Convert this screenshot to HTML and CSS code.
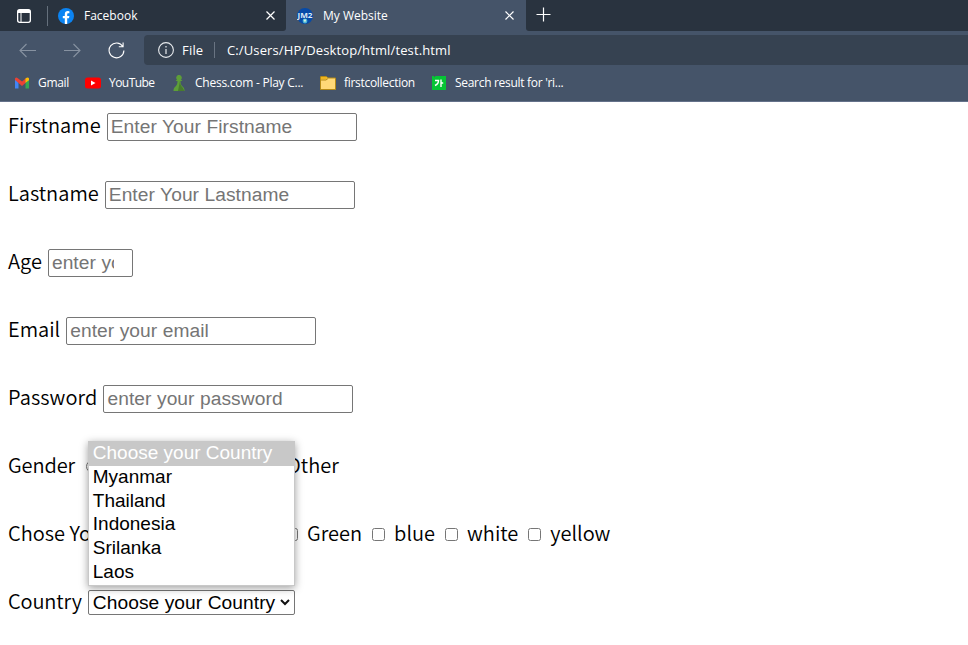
FILE: index.html
```
<!DOCTYPE html>
<html lang="en">
<head>
<meta charset="utf-8">
<title>My Website</title>
<link rel="stylesheet" href="styles.css">
</head>
<body>
<header class="browser">
  <div class="tabs">
    <div class="inactive">
      <svg class="workspace" width="14" height="14" viewBox="0 0 14 14"><rect x=".65" y=".65" width="12.7" height="12.7" rx="2" fill="none" stroke="#fff" stroke-width="1.3"/><path d="M1 1h12v3H1z" fill="#fff"/><path d="M4 4v9" stroke="#fff"/></svg>
      <i class="divider"></i>
      <svg class="facebook" width="16" height="16" viewBox="0 0 16 16"><circle cx="8" cy="8" r="8" fill="#0b84f3"/><path d="M6.8 16v-5.7h-2V8h2V6.2c0-2 1.2-3.1 3-3.1l1.6.1v2h-1c-.9 0-1.2.5-1.2 1.1V8h2.2l-.4 2.3H9.2V16z" fill="#fff"/></svg>
      <span class="tab-title">Facebook</span>
      <svg class="close" width="9" height="9" viewBox="0 0 9 9"><path d="M.5.5l8 8M8.5.5l-8 8" stroke="#fff" stroke-width="1.2"/></svg>
    </div>
    <div class="active">
      <svg class="jm" width="16" height="16" viewBox="0 0 16 16"><circle cx="8" cy="8" r="8" fill="#064aa7"/><text x="8" y="9.6" text-anchor="middle" textLength="15" lengthAdjust="spacingAndGlyphs">JM2</text><circle cx="8" cy="13" r="2.4" fill="#4eb5d4"/><path d="M6.5 12l2-1 .5 1.5-1 2z" fill="#d7f2dd"/></svg>
      <span class="tab-title">My Website</span>
      <svg class="close" width="9" height="9" viewBox="0 0 9 9"><path d="M.5.5l8 8M8.5.5l-8 8" stroke="#fff" stroke-width="1.2"/></svg>
    </div>
    <div class="newtab"><svg width="15" height="15" viewBox="0 0 15 15"><path d="M7.5.5v14M.5 7.5h14" stroke="#fff" stroke-width="1.2"/></svg></div>
  </div>
  <div class="toolbar">
    <svg class="arrow" width="17" height="15" viewBox="0 0 17 15"><path d="M17 7.5H1M7.5 1L1 7.5 7.5 14" fill="none" stroke="#8792a1" stroke-width="1.1"/></svg>
    <svg class="arrow forward" width="17" height="15" viewBox="0 0 17 15"><path d="M0 7.5h16M9.5 1L16 7.5 9.5 14" fill="none" stroke="#8792a1" stroke-width="1.1"/></svg>
    <svg class="reload" width="17" height="17" viewBox="0 0 17 17"><path d="M14.8 4.5A7.4 7.4 0 1 0 15.9 8.5M15.1.5v4.2h-4.3" fill="none" stroke="#fff" stroke-width="1.1"/></svg>
    <div class="address">
      <svg width="16" height="16" viewBox="0 0 16 16"><circle cx="8" cy="8" r="7.4" fill="none" stroke="#e8ebee" stroke-width="1.1"/><path d="M8 7v5M8 4v1.5" stroke="#e8ebee" stroke-width="1.2"/></svg>
      <span class="file">File</span><i></i><span class="url">C:/Users/HP/Desktop/html/test.html</span>
    </div>
  </div>
  <nav class="bookmarks">
    <a class="gmail"><svg width="16" height="16" viewBox="0 0 16 16"><path d="M1 13.5V4l3.5 2.3v7.2z" fill="#4285f4"/><path d="M11.5 6.3L15 4v9.5h-3.5z" fill="#34a853"/><path d="M1 5V3.5Q2 2 3.5 3L8 6.5 12 3.3v4.2L8 11 4 7.5z" fill="#ea4335"/><path d="M11.5 7.8V3.5Q14 1.5 15 3.5V5.3z" fill="#fbbc04"/></svg><span>Gmail</span></a>
    <a class="youtube"><svg width="16" height="16" viewBox="0 0 16 16"><rect y="2.5" width="16" height="11" rx="2.5" fill="#f00"/><path d="M6 5.5v5L10.5 8z" fill="#fff"/></svg><span>YouTube</span></a>
    <a class="chess"><svg width="16" height="16" viewBox="0 0 16 16"><path d="M6 4.5a2.7 2.7 0 1 1 4 0L11.5 6H9.5c0 3 .7 4.5 2.5 6 1.2 1 1.5 2 1.5 4h-11c0-2 .3-3 1.5-4 1.8-1.5 2.5-3 2.5-6h-2z" fill="#5d9e38"/><path d="M9 6c0 3 1 5 2.5 6.5L13.5 16H7z" fill="#487b2d"/></svg><span>Chess.com - Play C...</span></a>
    <a class="folder"><svg width="16" height="16" viewBox="0 0 16 16"><path d="M.5 13V2Q.5 1.5 1 1.5h5L8 3h7.5v11.5H.5z" fill="#ffd978" stroke="#b58a16"/><path d="M1 2h5l1.5 1L6 4.5H1z" fill="#f0b51d"/><path d="M.7 5H6l2-1.5" fill="none" stroke="#b58a16"/></svg><span>firstcollection</span></a>
    <a class="search"><svg width="14" height="14" viewBox="0 0 14 14"><path d="M0 0h2v1h1V0h11v14H0z" fill="#06c535"/><path d="M3 4.5h3.5Q6.5 8 3 9.5M9 3.5V11M9 7h2.2" fill="none" stroke="#fff" stroke-width="1.4"/></svg><span>Search result for 'ri...</span></a>
  </nav>
</header>
<main>
  <div class="row"><label for="first">Firstname</label><input id="first" placeholder="Enter Your Firstname"></div>
  <div class="row"><label for="last">Lastname</label><input id="last" placeholder="Enter Your Lastname"></div>
  <div class="row"><label for="age">Age</label><input id="age" class="age" placeholder="enter yo"></div>
  <div class="row"><label for="email">Email</label><input id="email" placeholder="enter your email"></div>
  <div class="row password"><label for="password">Password</label><input id="password" type="password" placeholder="enter your password"></div>
  <div class="row gender"><span class="gender-label">Gender</span><input class="radio" type="radio"><span class="other">Other</span></div>
  <div class="row colors"><span class="favorite">Chose You</span><input type="checkbox"><span>Green</span><input type="checkbox"><span>blue</span><input type="checkbox"><span>white</span><input type="checkbox"><span>yellow</span></div>
  <div class="row country"><label>Country</label>
    <div class="picker">
      <div class="select"><span>Choose your Country</span><svg width="10" height="7" viewBox="0 0 10 7"><path d="M1 1l4 4 4-4" fill="none" stroke="#111" stroke-width="2"/></svg></div>
      <div class="popup"><div class="chosen">Choose your Country</div><div>Myanmar</div><div>Thailand</div><div>Indonesia</div><div>Srilanka</div><div>Laos</div></div>
    </div>
  </div>
</main>
</body>
</html>
```
FILE: styles.css
```
* { box-sizing: border-box; }
body { margin: 0; background: #fff; color: #000; overflow: hidden; font: 350 20px "Noto Sans CJK JP", sans-serif; }
.browser { height: 102px; background: #455469; color: #fff; font: 12px "Open Sans", sans-serif; border-bottom: 1px solid #64718a; }
.browser svg { display: block; flex: none; }
.tabs { height: 31px; display: flex; background: #455469; }
.inactive { width: 286px; background: #29333f; display: flex; align-items: center; padding-left: 17px; border-radius: 0 0 3px 0; }
.divider { width: 1px; height: 20px; background: #65707c; margin: 0 10px 0 16px; }
.tab-title { margin: -1px 0 0 10px; white-space: nowrap; }
.inactive .close { margin: 0 11px 0 auto; }
.active { width: 240px; display: flex; align-items: center; padding-left: 11px; }
.active .close { margin: 0 12px 0 auto; }
.jm text { font: bold 7px "Open Sans", sans-serif; fill: #dce9f5; }
.newtab { flex: 1; background: #29333f; padding: 7px 0 0 10px; border-radius: 0 0 0 3px; }
.toolbar { height: 38px; display: flex; align-items: center; padding: 4px 0 4px 19px; }
.arrow.forward { margin-left: 28px; }
.reload { margin-left: 27px; }
.address { margin-left: 19px; flex: 1; height: 30px; background: #364251; border-radius: 4px 0 0 4px; display: flex; align-items: center; padding-left: 14px; font-size: 13px; white-space: nowrap; }
.file { margin-left: 8px; width: 21px; letter-spacing: .2px; }
.address i { width: 1px; height: 16px; background: #697482; margin: 0 12px 0 11px; }
.url { letter-spacing: .12px; }
.bookmarks { height: 28px; display: flex; align-items: center; padding-left: 14px; }
.bookmarks a { display: flex; align-items: center; gap: 8px; white-space: nowrap; height: 28px; flex: none; letter-spacing: -.3px; }
.bookmarks span { margin-top: -1px; }
.gmail { width: 71px; }
.youtube { width: 86px; }
.bookmarks .youtube span { letter-spacing: -.55px; }
.chess { width: 149px; }
.chess span { letter-spacing: -.25px; }
.folder { width: 112px; }
.search span { margin-left: 1px; }
main { padding: 0 8px; }
.row { height: 68px; display: flex; align-items: flex-start; line-height: 28px; padding-top: 9px; white-space: nowrap; }
.row > label { margin-right: 6px; }
.password > label { letter-spacing: .1px; }
.country > label { letter-spacing: -.13px; }
.row > input { width: 250px; height: 28px; margin: 2px 0 0; padding: 1px 3px; border: 1px solid #767676; border-radius: 2px; font: 19.2px "Liberation Sans", Arial, sans-serif; letter-spacing: .07px; }
input::placeholder { color: #757575; opacity: 1; }
.row .age { width: 85px; padding-right: 18px; }
.gender-label { width: 68px; letter-spacing: -.1px; }
.row .radio { width: 13px; height: 13px; margin: 9px 0 0 10px; }
.other { margin-left: 187px; }
.favorite { width: 277px; }
.colors input[type=checkbox] { width: 13px; height: 13px; margin: 9px 9px 0 10px; padding: 0; }
.colors .favorite + input { margin-left: 0; }
.picker { position: relative; width: 207px; margin-top: 3px; font: 19.2px/24px "Liberation Sans", Arial, sans-serif; }
.select { height: 25px; border: 1px solid #767676; border-radius: 2px; display: flex; align-items: center; padding: 0 4px; justify-content: space-between; letter-spacing: .06px; }
.popup { position: absolute; left: 0; bottom: 29px; width: 207px; height: 145px; border: 1px solid #c8c8c8; background: #fff; box-shadow: 0 2px 8px rgba(0,0,0,.38); font-size: 19px; }
.popup div { height: 23.8px; padding-left: 4px; line-height: 22px; }
.popup .chosen { background: #c8c8c8; color: #fff; }
```
